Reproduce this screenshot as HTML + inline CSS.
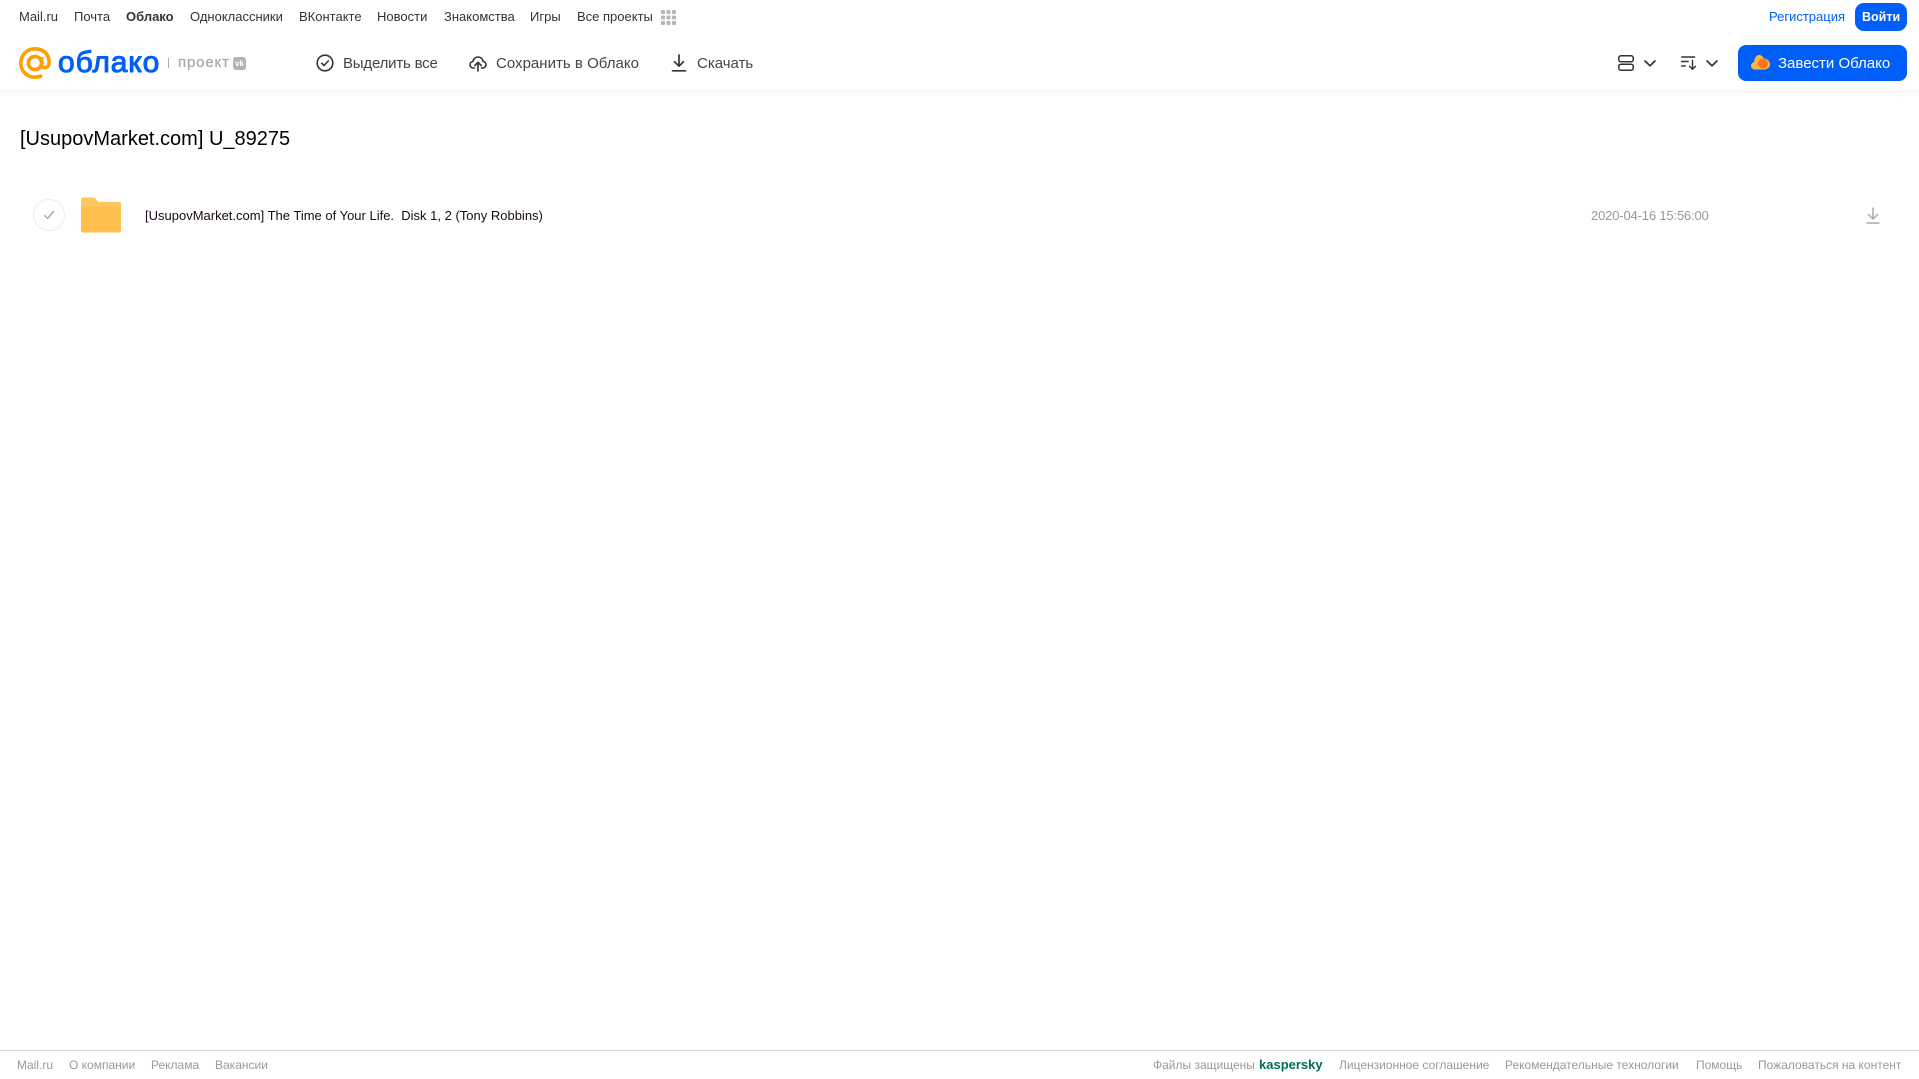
<!DOCTYPE html>
<html lang="ru"><head><meta charset="utf-8"><title>Облако</title>
<style>
html,body{margin:0;padding:0;background:#fff;width:1919px;height:1079px;overflow:hidden;font-family:"Liberation Sans",Arial,sans-serif}
.t{position:absolute;white-space:nowrap;line-height:16px}
.n{top:9px;font-size:13px;color:#333}
.a{top:56px;font-size:15px;color:#444}
.f{top:1057px;font-size:12px;color:#999;line-height:16px}
svg{position:absolute;overflow:visible}
</style></head><body>
<div style="position:absolute;left:0;top:0;width:1919px;height:90px;background:#fff;box-shadow:0 1px 6px rgba(0,0,0,.07)"></div>

<span class="t n" style="left:19px">Mail.ru</span>
<span class="t n" style="left:74px">Почта</span>
<span class="t n" style="left:126px;font-weight:bold">Облако</span>
<span class="t n" style="left:190px">Одноклассники</span>
<span class="t n" style="left:299px">ВКонтакте</span>
<span class="t n" style="left:377px">Новости</span>
<span class="t n" style="left:444px">Знакомства</span>
<span class="t n" style="left:530px">Игры</span>
<span class="t n" style="left:577px">Все проекты</span>
<svg style="left:661px;top:10px" width="15" height="15" fill="#b5b5b5"><rect width="4" height="4" rx="1"/><rect x="5.5" width="4" height="4" rx="1"/><rect x="11" width="4" height="4" rx="1"/><rect y="5.5" width="4" height="4" rx="1"/><rect x="5.5" y="5.5" width="4" height="4" rx="1"/><rect x="11" y="5.5" width="4" height="4" rx="1"/><rect y="11" width="4" height="4" rx="1"/><rect x="5.5" y="11" width="4" height="4" rx="1"/><rect x="11" y="11" width="4" height="4" rx="1"/></svg>
<span class="t" style="left:1769px;top:9px;font-size:13px;color:#005ff9">Регистрация</span>
<div style="position:absolute;left:1855px;top:3px;width:52px;height:28px;border-radius:9px;background:#005ff9"></div>
<span class="t" style="left:1862px;top:9px;font-size:12.5px;color:#fff;font-weight:bold">Войти</span>

<svg style="left:19px;top:47px" width="32" height="32" viewBox="0 0 32 32" fill="none" stroke="#ff9e00" stroke-width="3.6"><circle cx="16" cy="16" r="6.6"/><path d="M22.6 10v7.5c0 4.6 7.4 4.6 7.500-2C30.200 7 24 1.800 16 1.800 8 1.800 1.800 8 1.800 16S8 30.200 16 30.200c2.800 0 5-.6 7-1.800"/></svg>
<span class="t" style="left:58px;top:45px;font-size:30px;line-height:36px;color:#005ff9;-webkit-text-stroke:1px #005ff9;letter-spacing:.9px">облако</span>
<div style="position:absolute;left:168px;top:58px;width:1px;height:10px;background:#aaa"></div>
<span class="t" style="left:178px;top:55px;font-size:15px;color:#aaa;-webkit-text-stroke:.3px #aaa;letter-spacing:.85px">проект</span>
<div style="position:absolute;left:233px;top:57px;width:13px;height:13px;border-radius:3px;background:#b3b3b3;color:#fff;font-size:8px;font-weight:bold;line-height:13px;text-align:center">vk</div>

<svg style="left:316px;top:54px" width="18" height="18" viewBox="0 0 18 18" fill="none" stroke="#333" stroke-width="1.6"><circle cx="9" cy="9" r="7.8"/><path d="M5.700 9.200l2.300 2.300 4.300-4.500" stroke-linecap="round" stroke-linejoin="round"/></svg>
<span class="t a" style="left:343px;letter-spacing:-.2px">Выделить все</span>
<svg style="left:469px;top:54px" width="18" height="18" viewBox="0 0 18 18" fill="none" stroke="#333" stroke-width="1.600" stroke-linecap="round" stroke-linejoin="round"><path d="M5.500 14H4.500C2.500 14 1 12.500 1 10.700c0-1.700 1.200-3 2.900-3.200C4.300 4.800 6.400 3 9 3c2.700 0 4.800 1.900 5.100 4.500 1.700.2 2.900 1.500 2.900 3.200 0 1.800-1.500 3.300-3.500 3.300h-1"/><path d="M9 17V8.500M5.800 11.500L9 8.300l3.200 3.200"/></svg>
<span class="t a" style="left:496px;letter-spacing:.02px">Сохранить в Облако</span>
<svg style="left:671px;top:54px" width="16" height="18" viewBox="0 0 16 18" fill="none" stroke="#333" stroke-width="1.700" stroke-linecap="round" stroke-linejoin="round"><path d="M8 1v11M3.500 7.700L8 12.200l4.500-4.500M1.500 16.800h13"/></svg>
<span class="t a" style="left:697px">Скачать</span>

<svg style="left:1618px;top:55px" width="16" height="16" fill="none" stroke="#333" stroke-width="1.500"><rect x=".8" y=".8" width="14.400" height="6" rx="2"/><rect x=".8" y="9.200" width="14.400" height="6" rx="2"/></svg>
<svg style="left:1644px;top:60px" width="12" height="7" fill="none" stroke="#333" stroke-width="1.700" stroke-linecap="round" stroke-linejoin="round"><path d="M1 1l5 4.800L11 1"/></svg>
<svg style="left:1681px;top:56px" width="17" height="14" fill="none" stroke="#333" stroke-width="1.400" stroke-linecap="round" stroke-linejoin="round"><path d="M.7 1h13M.7 5.500h6.500M.7 10h3.500M11.500 4.500v8.500M8.500 10.300l3 3 3-3"/></svg>
<svg style="left:1706px;top:60px" width="12" height="7" fill="none" stroke="#333" stroke-width="1.700" stroke-linecap="round" stroke-linejoin="round"><path d="M1 1l5 4.800L11 1"/></svg>

<div style="position:absolute;left:1738px;top:45px;width:169px;height:36px;border-radius:8px;background:#005ff9"></div>
<svg style="left:1751px;top:54px" width="19" height="16" viewBox="0 0 19 16"><path d="M4 15.500C1.700 15.500 0 13.800 0 11.800c0-1.800 1.300-3.200 3-3.500C3.500 5 4.800 1 8 1c2.500 0 4.200 1.500 5 3.500 3.500.2 6 2.700 6 5.800 0 3-2.400 5.200-5.500 5.200z" fill="#ffb347"/><circle cx="12" cy="9.500" r="5" fill="#f5761f"/></svg>
<span class="t" style="left:1778px;top:56px;font-size:15px;color:#fff">Завести Облако</span>

<span class="t" style="left:20px;top:126px;font-size:20px;line-height:26px;color:#000">[UsupovMarket.com] U_89275</span>

<div style="position:absolute;left:33px;top:199px;width:30px;height:30px;border:1px solid #ececec;border-radius:50%"></div>
<svg style="left:43px;top:210px" width="12" height="10" fill="none" stroke="#aaa" stroke-width="1.400" stroke-linecap="round" stroke-linejoin="round"><path d="M1.500 5.500l3 3L10.500 1.500"/></svg>
<svg style="left:81px;top:197px" width="40" height="36" viewBox="0 0 41 36"><path d="M2 0h10c2 0 3 1 4 2.500L18 4.500h21c1.200 0 2 .8 2 2V34c0 1.200-.8 2-2 2H2c-1.200 0-2-.8-2-2V2C0 .8.800 0 2 0z" fill="#ffc75f"/><path d="M0 9.500h41V34c0 1.200-.8 2-2 2H2c-1.200 0-2-.8-2-2z" fill="#ffbe4d"/></svg>
<span class="t" style="left:145px;top:208px;font-size:13px;color:#1a0a1a">[UsupovMarket.com] The Time of Your Life.&nbsp; Disk 1, 2 (Tony Robbins)</span>
<span class="t" style="left:1591px;top:208px;font-size:13px;color:#999;letter-spacing:-.16px">2020-04-16 15:56:00</span>
<svg style="left:1866px;top:207px" width="14" height="17" fill="none" stroke="#aaa" stroke-width="1.500" stroke-linejoin="round"><path d="M7 .5v11M2 7l5 5 5-5M.5 16h13"/></svg>

<div style="position:absolute;left:0;top:1050px;width:1919px;height:1px;background:#d9d9d9"></div>
<span class="t f" style="left:17px">Mail.ru</span>
<span class="t f" style="left:69px">О компании</span>
<span class="t f" style="left:151px">Реклама</span>
<span class="t f" style="left:215px">Вакансии</span>
<span class="t f" style="left:1153px">Файлы защищены</span>
<span class="t f" style="left:1259px;font-size:13px;font-weight:bold;color:#006d5c">kaspersky</span>
<span class="t f" style="left:1339px">Лицензионное соглашение</span>
<span class="t f" style="left:1505px">Рекомендательные технологии</span>
<span class="t f" style="left:1696px">Помощь</span>
<span class="t f" style="left:1758px">Пожаловаться на контент</span>
</body></html>
